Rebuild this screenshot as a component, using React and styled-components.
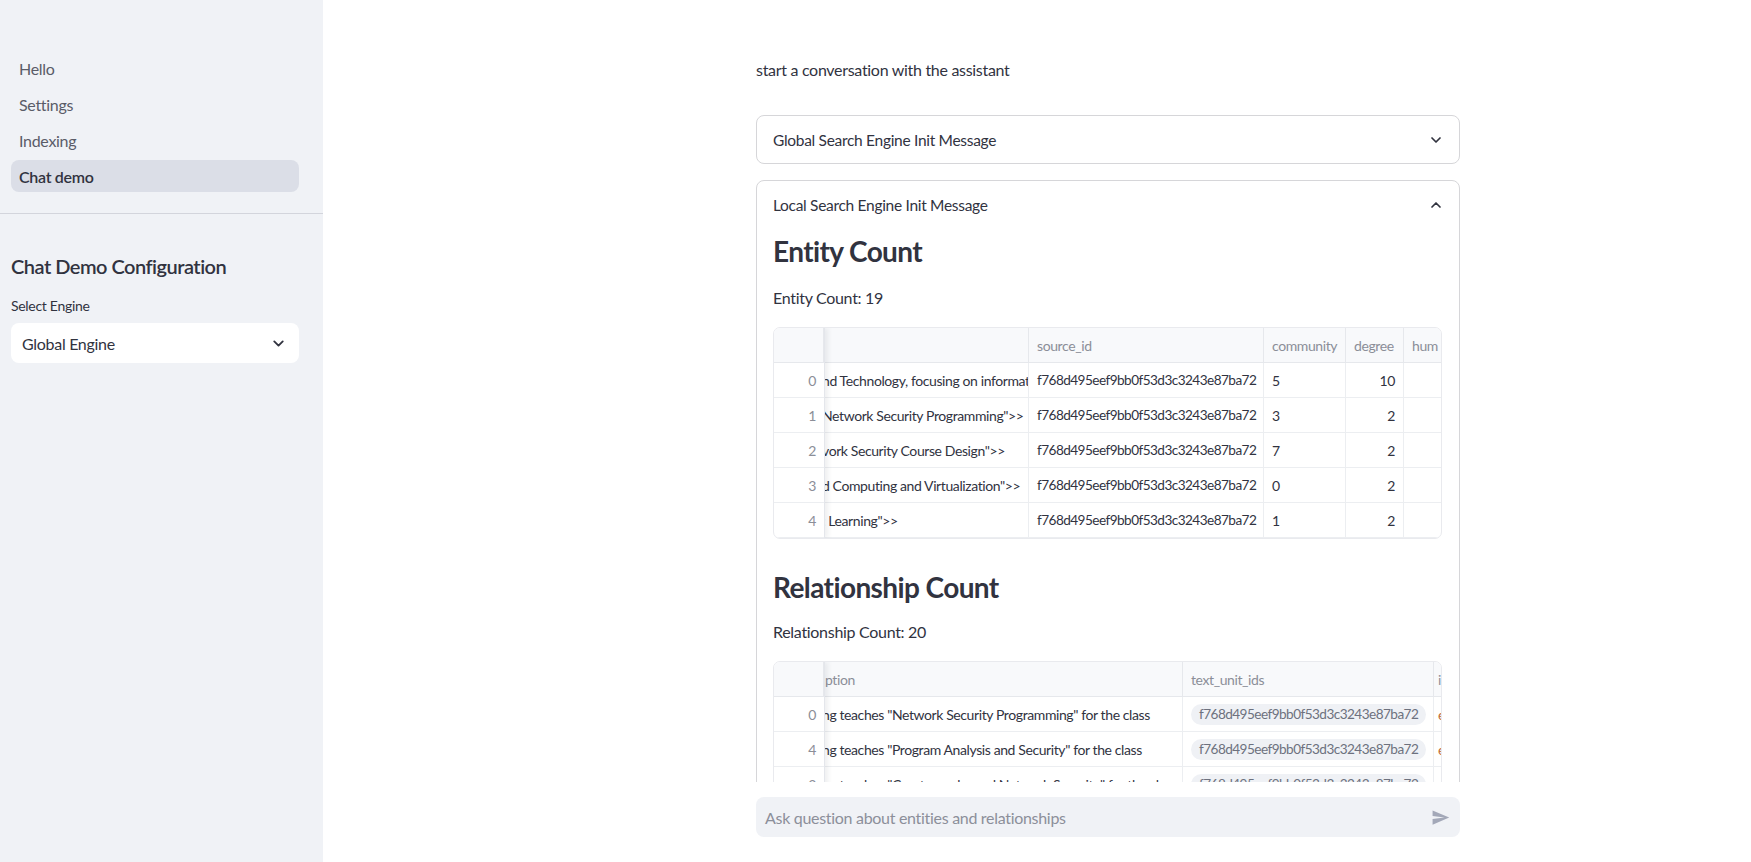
import React from "react";
import styled, { createGlobalStyle } from "styled-components";
import { ChevronDown, ChevronUp } from "lucide-react";

const GlobalStyle = createGlobalStyle`
  html, body, #root {
    margin: 0;
    height: 100%;
  }
  body {
    font-family: "Source Sans Pro", Lato, "Noto Sans", sans-serif;
    color: #31333f;
    background: #ffffff;
    overflow: hidden;
    letter-spacing: -0.3px;
  }
  * {
    box-sizing: border-box;
  }
`;

const navItems = ["Hello", "Settings", "Indexing", "Chat demo"];

const entityColumns = [
  { key: "desc", title: "", width: 204 },
  { key: "source", title: "source_id", width: 235 },
  { key: "community", title: "community", width: 82 },
  { key: "degree", title: "degree", width: 58 },
  { key: "hum", title: "hum", width: 60 },
];

const entityRows = [
  { idx: 0, desc: "nd Technology, focusing on information", community: "5", degree: "10" },
  { idx: 1, desc: "Network Security Programming\">>", community: "3", degree: "2" },
  { idx: 2, desc: "vork Security Course Design\">>", community: "7", degree: "2" },
  { idx: 3, desc: "d Computing and Virtualization\">>", community: "0", degree: "2" },
  { idx: 4, desc: ": Learning\">>", community: "1", degree: "2" },
];

const relColumns = [
  { key: "desc", title: "iption", width: 358 },
  { key: "units", title: "text_unit_ids", width: 251 },
  { key: "id", title: "id", width: 60, tight: true },
];

const relRows = [
  { idx: "0", desc: "ng teaches \"Network Security Programming\" for the class" },
  { idx: "4", desc: "ng teaches \"Program Analysis and Security\" for the class" },
  { idx: "3", desc: "ng teaches \"Cryptography and Network Security\" for the class" },
];

const SOURCE_ID = "f768d495eef9bb0f53d3c3243e87ba72";

function SendIcon() {
  return (
    <svg width="19" height="19" viewBox="0 0 24 24" fill="#a3a8b8">
      <path d="M2.01 21L23 12 2.01 3 2 10l15 2-15 2z" />
    </svg>
  );
}

function EntityTable() {
  return (
    <TableFrame>
      <IndexCol>
        <HeadCell />
        {entityRows.map((r) => (
          <IndexCell key={r.idx}>{r.idx}</IndexCell>
        ))}
      </IndexCol>
      <DataViewport>
        <Row>
          {entityColumns.map((c) => (
            <HeadCell key={c.key} $w={c.width}>
              {c.title}
            </HeadCell>
          ))}
        </Row>
        {entityRows.map((r) => (
          <Row key={r.idx}>
            <Cell $w={204} $cut>
              {r.desc}
            </Cell>
            <Cell $w={235}>
              <Hash>{SOURCE_ID}</Hash>
            </Cell>
            <Cell $w={82}>{r.community}</Cell>
            <Cell $w={58} $align="right">
              {r.degree}
            </Cell>
            <Cell $w={60} />
          </Row>
        ))}
      </DataViewport>
    </TableFrame>
  );
}

function RelationshipTable() {
  return (
    <TableFrame>
      <IndexCol>
        <HeadCell />
        {relRows.map((r) => (
          <IndexCell key={r.idx}>{r.idx}</IndexCell>
        ))}
      </IndexCol>
      <DataViewport>
        <Row>
          {relColumns.map((c) => (
            <HeadCell
              key={c.key}
              $w={c.width}
              $cut={c.key === "desc"}
              $tight={c.tight}
            >
              {c.title}
            </HeadCell>
          ))}
        </Row>
        {relRows.map((r) => (
          <Row key={r.idx}>
            <Cell $w={358} $cut>
              {r.desc}
            </Cell>
            <Cell $w={251}>
              <Pill>
                <Hash>{SOURCE_ID}</Hash>
              </Pill>
            </Cell>
            <Cell $w={60} $tight>
              <IdText>e8d</IdText>
            </Cell>
          </Row>
        ))}
      </DataViewport>
    </TableFrame>
  );
}

export default function App() {
  return (
    <>
      <GlobalStyle />
      <Shell>
        <Sidebar>
          <NavList>
            {navItems.map((item) => (
              <NavItem key={item} $active={item === "Chat demo"}>
                {item}
              </NavItem>
            ))}
          </NavList>
          <Divider />
          <SideSection>
            <SideTitle>Chat Demo Configuration</SideTitle>
            <FieldLabel>Select Engine</FieldLabel>
            <SelectBox>
              <span>Global Engine</span>
              <ChevronDown size={17} strokeWidth={2.6} color="#31333f" />
            </SelectBox>
          </SideSection>
        </Sidebar>

        <Main>
          <ScrollArea>
            <Column>
              <Intro>start a conversation with the assistant</Intro>

              <Expander>
                <ExpanderHead>
                  <span>Global Search Engine Init Message</span>
                  <ChevronDown size={16} strokeWidth={2.6} color="#31333f" />
                </ExpanderHead>
              </Expander>

              <Expander $open>
                <ExpanderHead>
                  <span>Local Search Engine Init Message</span>
                  <ChevronUp size={16} strokeWidth={2.6} color="#31333f" />
                </ExpanderHead>
                <ExpanderBody>
                  <SubHeader>Entity Count</SubHeader>
                  <Para>Entity Count: 19</Para>
                  <EntityTable />
                  <SubHeader $spaced>Relationship Count</SubHeader>
                  <Para $tight>Relationship Count: 20</Para>
                  <RelationshipTable />
                </ExpanderBody>
              </Expander>
            </Column>
          </ScrollArea>

          <BottomBar>
            <ChatInput>
              <Placeholder>Ask question about entities and relationships</Placeholder>
              <SendIcon />
            </ChatInput>
          </BottomBar>
        </Main>
      </Shell>
    </>
  );
}

const Shell = styled.div`
  display: flex;
  height: 100vh;
  width: 100%;
`;

const Sidebar = styled.aside`
  width: 323px;
  flex-shrink: 0;
  background: #f0f2f6;
  display: flex;
  flex-direction: column;
`;

const NavList = styled.nav`
  display: flex;
  flex-direction: column;
  gap: 4px;
  padding: 52px 24px 21px 11px;
`;

const NavItem = styled.div`
  height: 32px;
  display: flex;
  align-items: center;
  padding-left: 8px;
  border-radius: 8px;
  font-size: 16px;
  color: ${(p) => (p.$active ? "#31333f" : "#5a5c68")};
  font-weight: ${(p) => (p.$active ? 600 : 400)};
  background: ${(p) => (p.$active ? "#dbdee7" : "transparent")};
`;

const Divider = styled.div`
  height: 1px;
  background: #d3d5dc;
`;

const SideSection = styled.div`
  padding: 37px 24px 0 11px;
  display: flex;
  flex-direction: column;
`;

const SideTitle = styled.h2`
  margin: 0;
  font-size: 20px;
  line-height: 30px;
  font-weight: 600;
  color: #31333f;
  letter-spacing: -0.5px;
`;

const FieldLabel = styled.label`
  margin-top: 15px;
  font-size: 14px;
  line-height: 20px;
  color: #31333f;
`;

const SelectBox = styled.div`
  margin-top: 7px;
  height: 40px;
  background: #ffffff;
  border-radius: 8px;
  display: flex;
  align-items: center;
  justify-content: space-between;
  padding: 0 12px 0 11px;
  font-size: 16px;
  color: #31333f;
`;

const Main = styled.main`
  flex: 1;
  display: flex;
  flex-direction: column;
  min-width: 0;
`;

const ScrollArea = styled.div`
  flex: 1;
  overflow: hidden;
  display: flex;
  justify-content: center;
  padding-left: 142px;
`;

const Column = styled.div`
  width: 704px;
  flex-shrink: 0;
  padding-top: 58px;
  display: flex;
  flex-direction: column;
`;

const Intro = styled.p`
  margin: 0 0 33px;
  font-size: 16px;
  line-height: 24px;
`;

const Expander = styled.div`
  border: 1px solid #d6d6d9;
  border-radius: 8px;
  margin-bottom: 16px;
  ${(p) => p.$open && "min-height: 700px;"}
`;

const ExpanderHead = styled.div`
  height: 47px;
  display: flex;
  align-items: center;
  justify-content: space-between;
  padding: 0 15px 0 16px;
  font-size: 15.5px;
  color: #31333f;
`;

const ExpanderBody = styled.div`
  padding: 6px 15px 16px 16px;
  display: flex;
  flex-direction: column;
`;

const SubHeader = styled.h3`
  margin: ${(p) => (p.$spaced ? "31px" : "0")} 0 0;
  font-size: 28px;
  line-height: 34px;
  font-weight: 700;
  color: #31333f;
  letter-spacing: -0.6px;
`;

const Para = styled.p`
  margin: ${(p) => (p.$tight ? "16px" : "18px")} 0 17px;
  font-size: 16px;
  line-height: 24px;
`;

const TableFrame = styled.div`
  display: flex;
  width: 669px;
  border: 1px solid #e9eaee;
  border-radius: 7px;
  overflow: hidden;
  font-size: 14px;
  letter-spacing: -0.4px;
  background: #ffffff;
`;

const IndexCol = styled.div`
  width: 51px;
  flex-shrink: 0;
  display: flex;
  flex-direction: column;
  border-right: 1px solid #e4e6eb;
  box-shadow: 3px 0 5px rgba(40, 45, 60, 0.08);
  position: relative;
  z-index: 1;
`;

const DataViewport = styled.div`
  flex: 1;
  min-width: 0;
  overflow: hidden;
  display: flex;
  flex-direction: column;
`;

const Row = styled.div`
  display: flex;
`;

const HeadCell = styled.div`
  width: ${(p) => (p.$w ? `${p.$w}px` : "auto")};
  flex-shrink: 0;
  height: 35px;
  display: flex;
  align-items: center;
  padding: 0 ${(p) => (p.$tight ? "4px" : "8px")};
  background: #f8f9fb;
  color: #8b8e98;
  border-bottom: 1px solid #e6e8ec;
  border-right: 1px solid #e6e8ec;
  white-space: nowrap;
  overflow: hidden;
  ${(p) => p.$cut && "text-indent: -11px;"}
`;

const IndexCell = styled.div`
  height: 35px;
  display: flex;
  align-items: center;
  justify-content: flex-end;
  padding: 0 8px;
  color: #8b8e98;
  border-bottom: 1px solid #eceef1;
`;

const Cell = styled.div`
  width: ${(p) => p.$w}px;
  flex-shrink: 0;
  height: 35px;
  display: flex;
  align-items: center;
  justify-content: ${(p) => (p.$align === "right" ? "flex-end" : "flex-start")};
  padding: 0 ${(p) => (p.$tight ? "4px" : "8px")};
  border-bottom: 1px solid #eceef1;
  border-right: 1px solid #eceef1;
  white-space: nowrap;
  overflow: hidden;
  color: #31333f;
  ${(p) => p.$cut && "padding-left: 0; text-indent: -3px;"}
`;

const Hash = styled.span`
  font-size: 13.6px;
  letter-spacing: -0.55px;
`;

const Pill = styled.span`
  display: inline-flex;
  align-items: center;
  height: 21px;
  padding: 0 8px;
  border-radius: 11px;
  background: #eff1f5;
  color: #6d717e;
`;

const IdText = styled.span`
  color: #c2703a;
`;

const BottomBar = styled.div`
  height: 80px;
  flex-shrink: 0;
  background: #ffffff;
  display: flex;
  justify-content: center;
  padding: 15px 0 0 142px;
`;

const ChatInput = styled.div`
  width: 704px;
  height: 40px;
  background: #f0f2f6;
  border-radius: 8px;
  display: flex;
  align-items: center;
  justify-content: space-between;
  padding: 0 10px 0 9px;
`;

const Placeholder = styled.span`
  font-size: 16px;
  color: #8c8f9a;
`;
